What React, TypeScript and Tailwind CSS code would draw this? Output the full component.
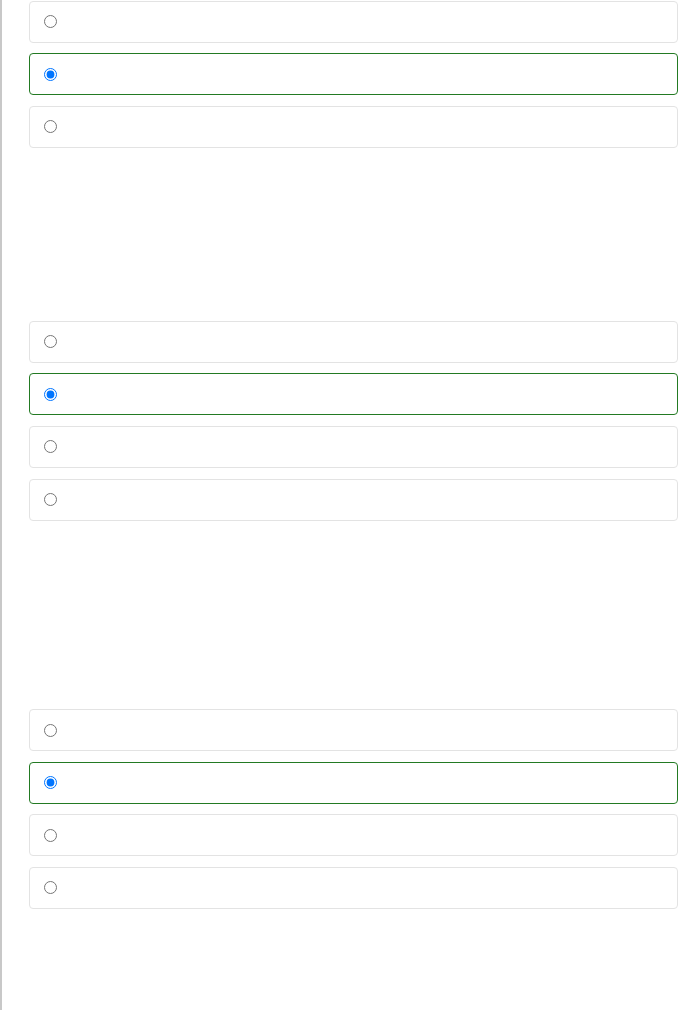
import React from "react";

type Group = { options: number; selected: number; spaceAfter: string };

const groups: Group[] = [
  { options: 3, selected: 1, spaceAfter: "h-[162.5px]" },
  { options: 4, selected: 1, spaceAfter: "h-[178px]" },
  { options: 4, selected: 1, spaceAfter: "h-0" },
];

function Option({ checked, name }: { checked: boolean; name: string }) {
  return (
    <label
      className={
        "flex h-[42px] mb-[10.6px] items-center rounded-[4px] border pl-[14px] bg-white " +
        (checked ? "border-[#237a23]" : "border-[#e3e3e3]")
      }
    >
      <input
        type="radio"
        name={name}
        defaultChecked={checked}
        className="m-0 h-[13px] w-[13px]"
      />
    </label>
  );
}

export default function App() {
  return (
    <div className="min-h-[1010px] bg-white border-l-2 border-[#c8c8c8] font-['Liberation_Sans',sans-serif]">
      <div className="pl-[27px] pt-[0.5px]">
        {groups.map((g, gi) => (
          <div key={gi}>
            {Array.from({ length: g.options }).map((_, i) => (
              <Option key={i} name={"q" + gi} checked={i === g.selected} />
            ))}
            <div className={g.spaceAfter} />
          </div>
        ))}
      </div>
    </div>
  );
}
